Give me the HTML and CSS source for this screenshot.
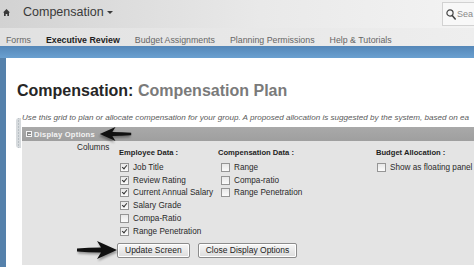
FILE: index.html
```html
<!DOCTYPE html>
<html lang="en">
<head>
    <meta charset="UTF-8">
    <meta name="viewport" content="width=device-width, initial-scale=1.0">
    <title>Compensation Plan</title>
    <link rel="stylesheet" href="styles.css">
</head>
<body>

<header class="topbar">
    <div class="brand">
        <svg class="home-icon" width="7" height="7" viewBox="0 0 7 7"><path d="M0 3.6 L3.5 0 L7 3.6 L6 3.6 L6 7 L4.3 7 L4.3 5 L2.7 5 L2.7 7 L1 7 L1 3.6 Z" fill="#3a3a3a"/></svg>
        <span class="app-title">Compensation</span>
        <span class="caret"></span>
    </div>
    <div class="search">
        <svg class="search-icon" width="10" height="11" viewBox="0 0 10 11"><circle cx="4" cy="4" r="3.1" fill="none" stroke="#444" stroke-width="1.2"/><path d="M6.2 6.4 L9.2 10" stroke="#444" stroke-width="1.6" stroke-linecap="round"/></svg>
        <span>Sea</span>
    </div>
</header>

<nav class="tabs">
    <span class="tab">Forms</span>
    <span class="tab active">Executive Review</span>
    <span class="tab">Budget Assignments</span>
    <span class="tab">Planning Permissions</span>
    <span class="tab">Help &amp; Tutorials</span>
</nav>
<div class="band"></div>

<div class="page">
    <h1>Compensation: <span class="plan-name">Compensation Plan</span></h1>
    <p class="intro">Use this grid to plan or allocate compensation for your group. A proposed allocation is suggested by the system, based on ea</p>

    <div class="options">
        <div class="handle"></div>
        <div class="options-bar"><span class="toggle"></span>Display Options</div>
        <div class="options-body">
            <div class="columns">
                <div class="columns-label">Columns</div>
                <div class="group group-employee">
                    <div class="group-title">Employee Data :</div>
                    <div class="row"><span class="box checked"></span>Job Title</div>
                    <div class="row"><span class="box checked"></span>Review Rating</div>
                    <div class="row"><span class="box checked"></span>Current Annual Salary</div>
                    <div class="row"><span class="box checked"></span>Salary Grade</div>
                    <div class="row"><span class="box"></span>Compa-Ratio</div>
                    <div class="row"><span class="box checked"></span>Range Penetration</div>
                </div>
                <div class="group group-comp">
                    <div class="group-title">Compensation Data :</div>
                    <div class="row"><span class="box"></span>Range</div>
                    <div class="row"><span class="box"></span>Compa-ratio</div>
                    <div class="row"><span class="box"></span>Range Penetration</div>
                </div>
                <div class="group group-budget">
                    <div class="group-title">Budget Allocation :</div>
                    <div class="row"><span class="box"></span>Show as floating panel</div>
                </div>
            </div>
            <div class="actions">
                <button class="btn">Update Screen</button>
                <button class="btn">Close Display Options</button>
            </div>
        </div>
    </div>
</div>

<svg class="arrow arrow-left" width="33" height="16" viewBox="0 0 42 20"><path d="M1 8.5 Q12 7.6 25 7.6 L21 1 L41 10 L21 19 L25 12.4 Q12 12.4 1 11.5 Z" fill="#111"/></svg>
<svg class="arrow arrow-right" width="42" height="20" viewBox="0 0 42 20"><path d="M1 8.5 Q12 7.6 25 7.6 L21 1 L41 10 L21 19 L25 12.4 Q12 12.4 1 11.5 Z" fill="#111"/></svg>

</body>
</html>
```

FILE: styles.css
```css
body {
    font-family: "Liberation Sans", Arial, sans-serif;
    margin: 0;
    width: 474px;
    height: 267px;
    overflow: hidden;
    background: #fff;
    position: relative;
    color: #222;
}
.topbar {
    height: 28px;
    display: flex;
    align-items: center;
    background: linear-gradient(to right, #d2d2d2, #e9e9e9 55%, #f3f3f3);
}
.brand {
    display: flex;
    align-items: center;
    padding: 0 0 4px 3px;
}
.home-icon {
    margin-right: 13px;
}
.app-title {
    font-size: 12.5px;
    color: #3a3a3a;
}
.caret {
    margin-left: 3px;
    border-left: 3px solid transparent;
    border-right: 3px solid transparent;
    border-top: 3.5px solid #3a3a3a;
}
.search {
    margin-left: auto;
    width: 28px;
    height: 22px;
    padding-left: 3px;
    display: flex;
    align-items: center;
    gap: 1px;
    white-space: nowrap;
    background: #f8f8f8;
    border: 1px solid #d2d2d2;
    border-right: none;
    font-size: 9px;
    color: #888;
}
.search-icon {
    flex: none;
}
.tabs {
    height: 18px;
    display: flex;
    align-items: flex-end;
    gap: 15px;
    padding: 0 0 1px 6px;
    box-sizing: border-box;
    background: linear-gradient(to right, #e1e1e1, #eeeeee);
    font-size: 8.8px;
    color: #666;
}
.tab.active {
    font-weight: bold;
    color: #1e1e1e;
}
.band {
    height: 12px;
    background: linear-gradient(#5587b8, #6aa0d0);
}
.page {
    border-left: 6px solid #5581ab;
    padding: 24px 0 0 11px;
    height: 209px;
    box-sizing: border-box;
}
h1 {
    margin: 0;
    font-size: 16px;
    line-height: 18px;
    color: #262626;
    white-space: nowrap;
}
.plan-name {
    color: #7a7a7a;
}
.intro {
    margin: 13px 0 0 5px;
    font-size: 8.1px;
    line-height: 10px;
    font-style: italic;
    color: #5a5a5a;
    white-space: nowrap;
}
.options {
    position: relative;
    margin-top: 4px;
}
.handle {
    position: absolute;
    left: -1px;
    top: -9px;
    width: 5px;
    height: 30px;
    border-radius: 3px 0 0 3px;
    background: radial-gradient(circle, #9aa3ab 0.6px, transparent 0.9px) center / 5px 3px, #d6dadd;
}
.options-bar {
    margin-left: 5px;
    height: 14px;
    display: flex;
    align-items: center;
    padding-left: 4px;
    background: linear-gradient(#a9a9a9, #9f9f9f);
    font-size: 7.6px;
    font-weight: bold;
    color: #f3f3f3;
    letter-spacing: 0.2px;
}
.toggle {
    width: 4px;
    height: 4px;
    margin-right: 2px;
    border: 1px solid #f3f3f3;
    background: linear-gradient(#f3f3f3, #f3f3f3) center / 3px 1px no-repeat, #8a8a8a;
}
.options-body {
    margin-left: 5px;
    height: 124px;
    padding: 2px 0 0 55px;
    box-sizing: border-box;
    background: #e4e4e4;
    font-size: 8.2px;
    color: #2a2a2a;
}
.columns {
    display: flex;
}
.columns-label {
    width: 42px;
    line-height: 10px;
}
.group {
    margin-top: 5px;
}
.group-employee {
    width: 99px;
}
.group-comp {
    width: 158px;
}
.group-title {
    font-size: 7.6px;
    font-weight: bold;
    line-height: 10px;
    margin-bottom: 3px;
    color: #1e1e1e;
}
.row {
    height: 12.8px;
    display: flex;
    align-items: center;
    padding-left: 1px;
    white-space: nowrap;
}
.group-comp .row {
    padding-left: 3px;
}
.box {
    width: 7px;
    height: 7px;
    margin-right: 4px;
    border: 1px solid #959595;
    background: linear-gradient(#e8e8e8, #fbfbfb);
    position: relative;
    flex: none;
}
.box.checked::after {
    content: "";
    position: absolute;
    left: 2px;
    top: 0;
    width: 2px;
    height: 4px;
    border-right: 1.3px solid #333;
    border-bottom: 1.3px solid #333;
    transform: rotate(40deg);
}
.actions {
    display: flex;
    gap: 8px;
    margin: 5px 0 0 40px;
}
.btn {
    margin: 0;
    height: 15px;
    padding: 0 7px;
    font-family: inherit;
    font-size: 8.5px;
    color: #222;
    border: 1px solid #8c8c8c;
    border-radius: 2px;
    background: linear-gradient(#f7f7f7, #dcdcdc);
    box-shadow: inset 0 0 0 1px #fff;
}
.arrow {
    position: absolute;
    filter: drop-shadow(1px 2px 1px rgba(0,0,0,0.35));
}
.arrow-left {
    left: 99px;
    top: 126px;
    transform: scaleX(-1);
}
.arrow-right {
    left: 76px;
    top: 240px;
}
```
